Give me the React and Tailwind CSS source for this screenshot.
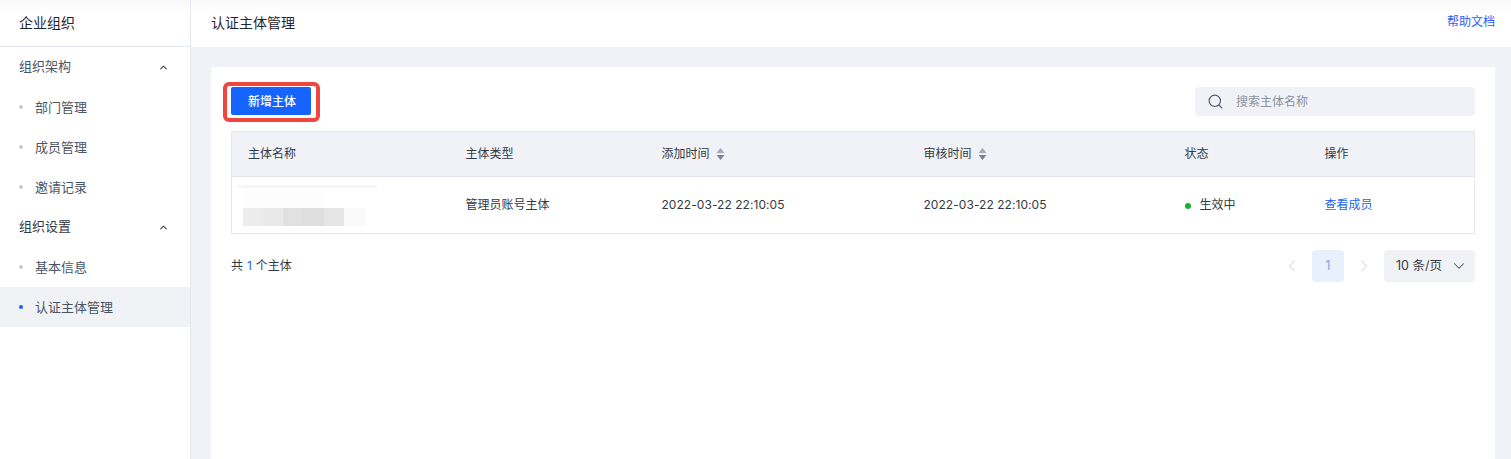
import React from 'react';
import { ChevronUp, ChevronDown, ChevronLeft, ChevronRight, Search } from 'lucide-react';

const font = "font-['Inter','Noto_Sans_CJK_SC',sans-serif]";

function NavItem({ label, active }) {
  return (
    <div className={`flex h-10 items-center pl-[19px] text-[13px] text-[#4b5563] ${active ? 'bg-[#f1f2f5]' : ''}`}>
      <span className={`h-1 w-1 rounded-full ${active ? 'bg-[#1664ff]' : 'bg-[#c9cdd4]'}`} />
      <span className="ml-3 pt-0.5">{label}</span>
    </div>
  );
}

function NavGroup({ label, dark }) {
  return (
    <div className={`flex h-10 items-center justify-between pl-[19px] pr-[21px] text-[13px] ${dark ? 'text-[#333a45]' : 'text-[#4b5563]'}`}>
      <span>{label}</span>
      <ChevronUp size={11} strokeWidth={3} className="text-[#4b5563]" />
    </div>
  );
}

function SortIcon() {
  return (
    <svg width="9" height="14" viewBox="0 0 9 14" className="ml-1.5">
      <path d="M4.5 1 L8.5 6 H0.5 Z" fill="#a3aab6" />
      <path d="M4.5 13 L8.5 8 H0.5 Z" fill="#7c8494" />
    </svg>
  );
}

// blurred out subject name in the table
function BlurredName() {
  return (
    <div className="flex h-full flex-col pl-[5px] pt-2">
      <div className="h-[3px] w-[140px] bg-[#f6f6f9]" />
      <div className="ml-1.5 flex h-5">
        <div className="w-20 bg-[#fdfdfd]" />
      </div>
      <div className="ml-1.5 flex h-[18px]">
        <div className="w-5 bg-[#ececec]" />
        <div className="w-5 bg-[#e9e9e9]" />
        <div className="w-5 bg-[#e1e1e1]" />
        <div className="w-[21px] bg-[#dfdfdf]" />
        <div className="w-5 bg-[#e6e6e6]" />
        <div className="w-[21px] bg-[#fafafa]" />
      </div>
    </div>
  );
}

export default function App() {
  return (
    <div className={`flex h-[459px] w-[1511px] overflow-hidden bg-white ${font}`}>
      <aside className="w-[191px] shrink-0 border-r border-[#e5e7ee] bg-white">
        <div className="flex h-[47px] items-center border-b border-[#e5e7ee] bg-gradient-to-b from-[#f8f8f8] to-white to-[30%] pl-[19px] text-sm text-[#1f2630]">
          企业组织
        </div>
        <NavGroup label="组织架构" />
        <NavItem label="部门管理" />
        <NavItem label="成员管理" />
        <NavItem label="邀请记录" />
        <NavGroup label="组织设置" dark />
        <NavItem label="基本信息" />
        <NavItem label="认证主体管理" active />
      </aside>

      <div className="flex min-w-0 flex-1 flex-col bg-[#f1f2f7]">
        <header className="flex h-[47px] shrink-0 items-center justify-between bg-gradient-to-b from-[#f8f8f8] to-white to-[30%] pl-5 pr-4">
          <span className="-mt-0.5 text-sm text-[#1f2630]">认证主体管理</span>
          <a className="-mt-1 text-xs text-[#2b5cf6]">帮助文档</a>
        </header>

        <main className="ml-5 mr-4 mt-5 flex-1 bg-white px-5 pt-5">
          <div className="flex h-[44px] items-start justify-between">
            <div className="relative">
              <button className="h-7 w-20 rounded-[2px] bg-[#1664ff] pl-0.5 pt-0.5 text-xs font-medium text-white">
                新增主体
              </button>
              {/* red highlight drawn over the screenshot */}
              <span className="pointer-events-none absolute -left-2 -top-[5px] h-10 w-[97px] rounded-[6px] border-4 border-[#f0463f]" />
            </div>
            <div className="flex h-[29px] w-[280px] items-center rounded-sm bg-[#f1f2f7] pl-3">
              <Search size={17} strokeWidth={1.6} className="text-[#4b5563]" />
              <span className="ml-3 text-xs text-[#8b93a1]">搜索主体名称</span>
            </div>
          </div>

          <table className="w-[1244px] table-fixed border-collapse border border-[#e5e7ee] text-xs">
            <colgroup>
              <col className="w-[234px]" />
              <col className="w-[196px]" />
              <col className="w-[262px]" />
              <col className="w-[261px]" />
              <col className="w-[140px]" />
              <col />
            </colgroup>
            <thead>
              <tr className="h-[45px] border-b border-[#e5e7ee] bg-[#f1f2f7] text-left text-[#333a45]">
                <th className="pl-4 font-normal">主体名称</th>
                <th className="font-normal">主体类型</th>
                <th className="font-normal">
                  <span className="flex items-center">添加时间<SortIcon /></span>
                </th>
                <th className="font-normal">
                  <span className="flex items-center">审核时间<SortIcon /></span>
                </th>
                <th className="font-normal">状态</th>
                <th className="font-normal">操作</th>
              </tr>
            </thead>
            <tbody>
              <tr className="h-[57px] text-[#333a45]">
                <td className="h-[57px] p-0 align-top"><BlurredName /></td>
                <td>管理员账号主体</td>
                <td className="tracking-[0.05px]">2022-03-22 22:10:05</td>
                <td className="tracking-[0.05px]">2022-03-22 22:10:05</td>
                <td>
                  <span className="flex items-center">
                    <span className="mt-0.5 h-1.5 w-1.5 rounded-full bg-[#0fb534]" />
                    <span className="ml-[9px]">生效中</span>
                  </span>
                </td>
                <td className="text-[#1f62f0]">查看成员</td>
              </tr>
            </tbody>
          </table>

          <div className="mt-4 flex items-center justify-between text-xs">
            <span className="text-[#333a45] [word-spacing:0.5px]">共 <span className="text-[#1f62f0]">1</span> 个主体</span>
            <div className="flex items-center">
              <ChevronLeft size={20} strokeWidth={1.2} className="text-[#c9cdd4]" />
              <span className="ml-2.5 flex h-8 w-8 items-center justify-center rounded-sm bg-[#e8f0fe] text-[13px] text-[#8fa5ee]">1</span>
              <ChevronRight size={20} strokeWidth={1.2} className="ml-2.5 text-[#c9cdd4]" />
              <div className="ml-2.5 flex h-8 w-[91px] items-center rounded-sm bg-[#f1f2f5] pl-3 text-[12.5px] text-[#333a45]">
                <span>10 条/页</span>
                <ChevronDown size={18} strokeWidth={1.4} className="ml-2 text-[#4b5563]" />
              </div>
            </div>
          </div>
        </main>
      </div>
    </div>
  );
}
